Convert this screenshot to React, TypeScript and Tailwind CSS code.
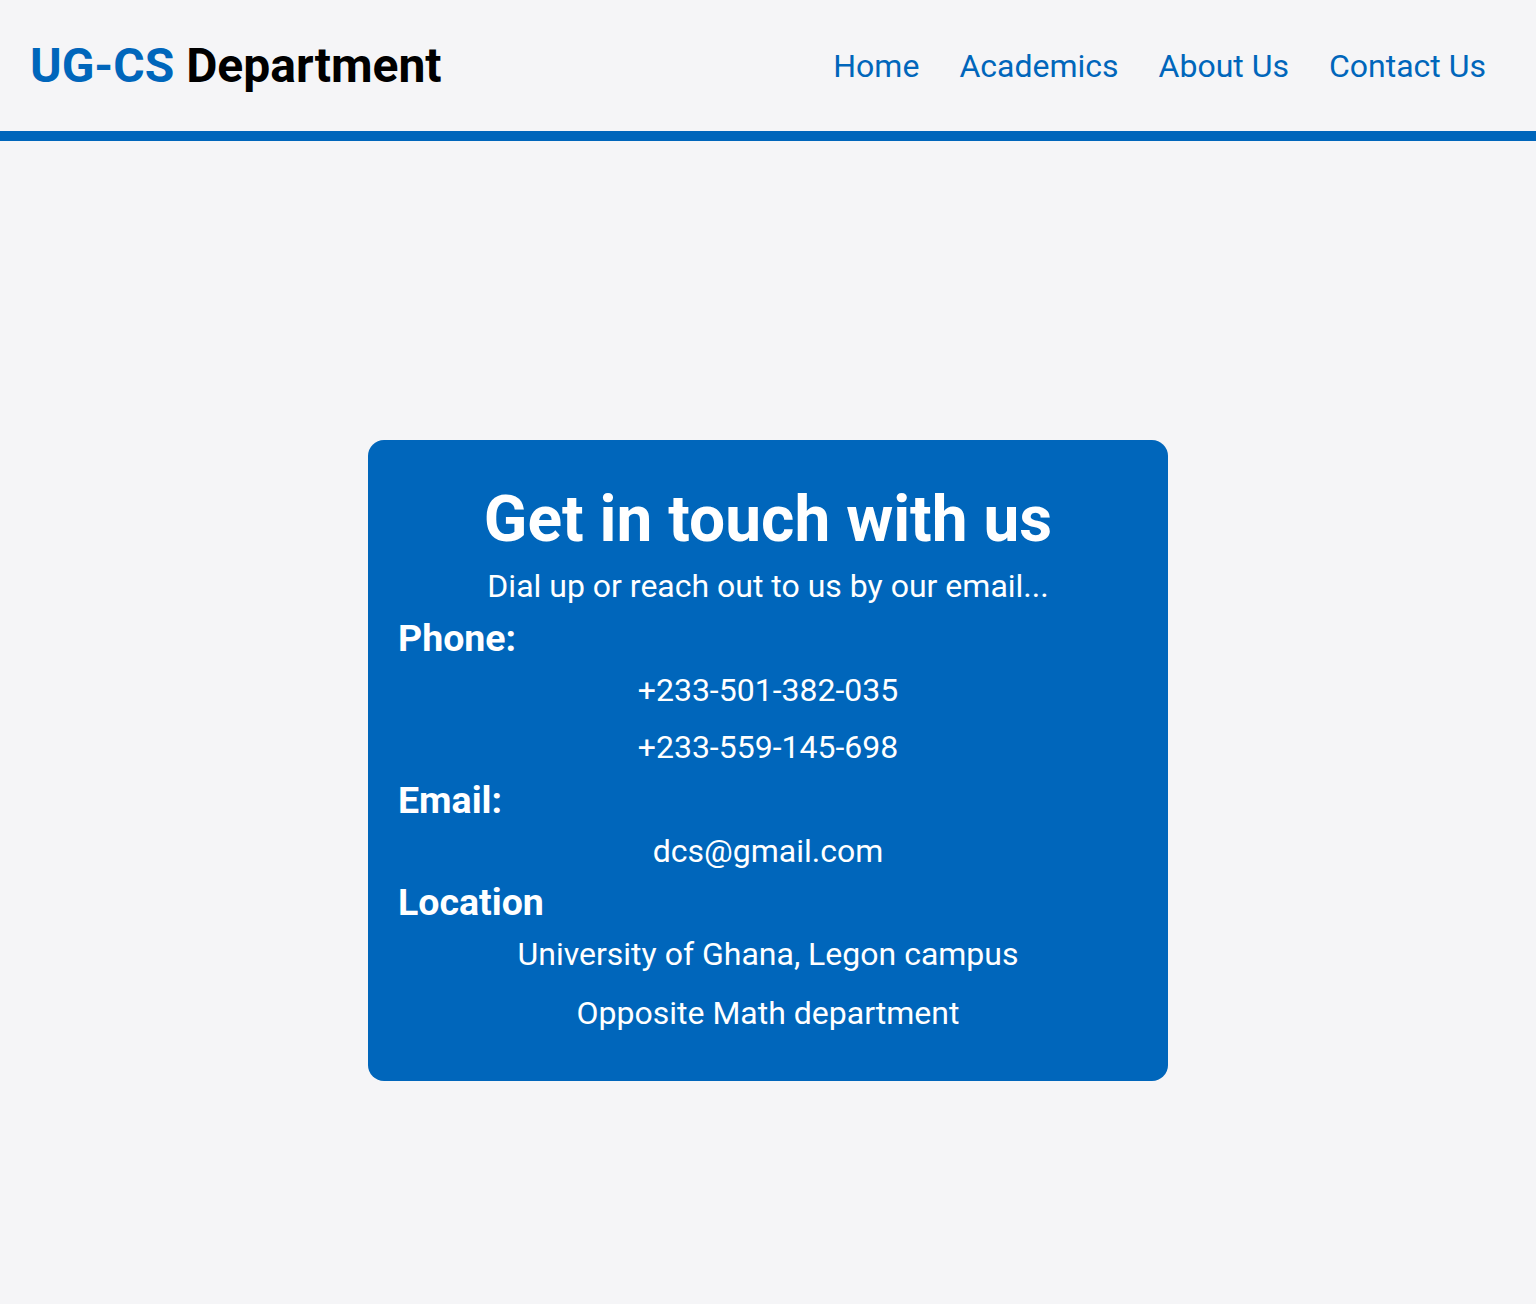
import React from 'react';

const navLinks = ['Home', 'Academics', 'About Us', 'Contact Us'];

function Header() {
  return (
    <header className="h-[141px] flex items-center justify-between pl-[30px] pr-[50px] border-b-[10px] border-[#0066bb]">
      <h1 className="text-[48px] font-bold text-black">
        <span className="text-[#0066bb]">UG-CS</span> Department
      </h1>
      <nav className="flex items-center gap-[40px]">
        {navLinks.map((link) => (
          <a key={link} href="#" className="text-[32px] text-[#0066bb]">
            {link}
          </a>
        ))}
      </nav>
    </header>
  );
}

function ContactCard() {
  return (
    <section className="w-[800px] mx-auto mt-[299px] bg-[#0066bb] rounded-2xl px-[30px] pt-[40px] pb-[37px] text-white">
      <h2 className="text-center text-[64px] font-bold leading-[79px]">Get in touch with us</h2>
      <p className="text-center text-[32px] leading-[55px]">Dial up or reach out to us by our email...</p>

      {/* Telefon */}
      <h3 className="text-[37.5px] font-bold leading-[48px]">Phone:</h3>
      <p className="text-center text-[32px] leading-[57px]">+233-501-382-035</p>
      <p className="text-center text-[32px] leading-[56px]">+233-559-145-698</p>

      {/* E-Mail */}
      <h3 className="text-[37.5px] font-bold leading-[51px]">Email:</h3>
      <p className="text-center text-[32px] leading-[51px]">dcs@gmail.com</p>

      {/* Standort */}
      <h3 className="text-[37.5px] font-bold leading-[50px]">Location</h3>
      <p className="text-center text-[32px] leading-[55px]">University of Ghana, Legon campus</p>
      <p className="text-center text-[32px] leading-[62px]">Opposite Math department</p>
    </section>
  );
}

export default function App() {
  return (
    <div className="min-h-screen bg-[#f5f5f7] font-['Roboto',sans-serif]">
      <Header />
      <main>
        <ContactCard />
      </main>
    </div>
  );
}
